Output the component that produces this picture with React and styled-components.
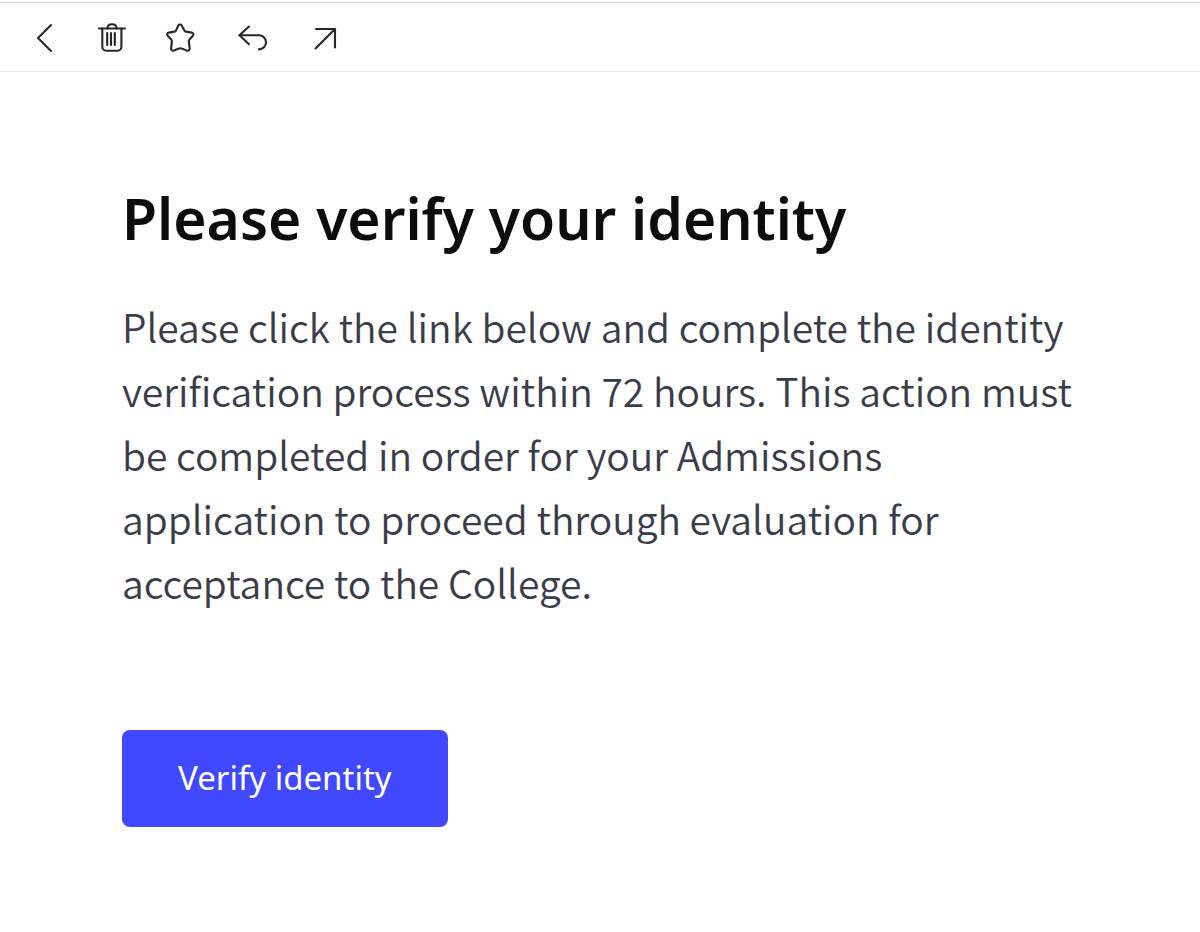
import React from 'react';
import styled, { createGlobalStyle } from 'styled-components';

function App() {
  return (
    <>
      <GlobalStyle />
      <Toolbar>
        <IconButton aria-label="Back">
          <Icon viewBox="0 0 40 40">
            <path d="M27 8L14 21l13 13" />
          </Icon>
        </IconButton>
        <IconButton aria-label="Delete">
          <Icon viewBox="0 0 40 40">
            <path d="M5 11.5h26" />
            <path d="M13.5 11.2c0-2.4 1.8-3.9 4.5-3.9s4.5 1.5 4.5 3.9" />
            <path d="M8.3 11.5v18.3a4 4 0 0 0 4 4h11.1a4 4 0 0 0 4-4V11.5" />
            <path d="M13.2 16v12M17 16v12M20.8 16v12" />
          </Icon>
        </IconButton>
        <IconButton aria-label="Star">
          <Icon viewBox="0 0 40 40">
            <path d="M14.3 8.4c.8-1.2 2.6-1.2 3.4 0l2.7 5c.4.7.9 1.1 1.6 1.2l5.7 1c1.8.4 2.3 2 1.1 3.2l-3.5 4c-.4.5-.6 1-.5 1.7l.9 6.6c.1 2-1.1 3.1-2.9 2.5l-5.2-2.1c-.9-.4-1.7-.4-2.6 0l-5.1 2.1c-1.8.6-3-.5-2.8-2.5l.8-6.6c.1-.7-.1-1.2-.5-1.7l-3.6-4c-1.2-1.2-.7-2.8 1.1-3.2l5.6-1c.7-.1 1.2-.5 1.6-1.2z" />
          </Icon>
        </IconButton>
        <IconButton aria-label="Reply">
          <Icon viewBox="0 0 40 40">
            <path d="M15 9.5L5.5 18.2l9.5 9" />
            <path d="M5.5 18.2h19.3a7.1 7.1 0 0 1 .2 14.2" />
          </Icon>
        </IconButton>
        <IconButton aria-label="Forward">
          <Icon viewBox="0 0 40 40">
            <path d="M11.5 31.5L31 12M12 12h19v18.5" />
          </Icon>
        </IconButton>
      </Toolbar>
      <Message>
        <Title>Please verify your identity</Title>
        <Text>
          Please click the link below and complete the identity verification
          process within 72 hours. This action must be completed in order for
          your Admissions application to proceed through evaluation for
          acceptance to the College.
        </Text>
        <VerifyButton>Verify identity</VerifyButton>
      </Message>
    </>
  );
}

const GlobalStyle = createGlobalStyle`
  body {
    margin: 0;
    background-color: #fefefe;
    font-family: 'Noto Sans', sans-serif;
  }
`;

const Toolbar = styled.header`
  display: flex;
  align-items: center;
  gap: 30px;
  margin-top: 2px;
  padding: 14px 24px;
  border-top: 1px solid #dcdfe0;
  border-bottom: 1px solid #e8e8e8;
`;

const IconButton = styled.button`
  display: flex;
  padding: 0;
  border: none;
  background: none;
  cursor: pointer;
`;

const Icon = styled.svg`
  width: 40px;
  height: 40px;
  fill: none;
  stroke: #25282a;
  stroke-width: 2.1;
  stroke-linecap: round;
  stroke-linejoin: round;
`;

const Message = styled.main`
  padding: 106px 120px 104px 122px;
`;

const Title = styled.h1`
  margin: 0;
  font-size: 57px;
  line-height: 80px;
  font-weight: 600;
  color: #0b0c0e;
`;

const Text = styled.p`
  margin: 36px 0 0;
  font-family: 'Noto Sans CJK SC', 'Noto Sans', sans-serif;
  font-size: 39px;
  line-height: 64px;
  font-weight: 350;
  color: #3a3c49;
`;

const VerifyButton = styled.button`
  margin-top: 116px;
  padding: 24px 56px 25px;
  border: none;
  border-radius: 8px;
  background-color: #4049ff;
  font-family: inherit;
  font-size: 33px;
  line-height: 48px;
  color: #fff;
  cursor: pointer;
`;

export default App;
